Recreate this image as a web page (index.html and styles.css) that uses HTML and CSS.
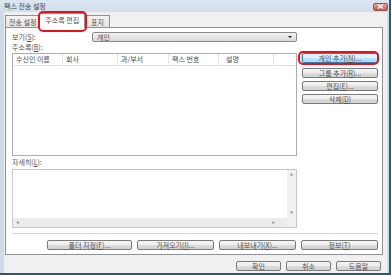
FILE: index.html
```html
<!DOCTYPE html>
<html>
  <head>
    <title>팩스 전송 설정</title>
    <link rel="stylesheet" href="styles.css">
  </head>
  <body>
    <div class="desktop">
      <div class="window">
        <div class="titlebar">
          <span class="title">팩스 전송 설정</span>
          <span class="close">
            <svg width="9" height="5" viewBox="0 0 9 5">
              <path d="M2 0.5 L7 4.5 M7 0.5 L2 4.5" stroke="#fff" stroke-width="1.4" />
            </svg>
          </span>
        </div>
        <div class="client">
          <div class="tabs">
            <div class="tab">전송 설정</div>
            <div class="tab active">주소록 편집<span class="mark tab-mark"></span></div>
            <div class="tab">표지</div>
          </div>
          <div class="panel">
            <div class="view-row">
              <span class="label">보기(<u>S</u>):</span>
              <div class="combo"><span>개인</span><span class="arrow"></span></div>
            </div>
            <div class="caption">주소록(<u>B</u>):</div>
            <div class="book">
              <div class="list">
                <div class="list-head">
                  <span class="col c1">수신인 이름</span>
                  <span class="col c2">회사</span>
                  <span class="col c3">과/부서</span>
                  <span class="col c4">팩스 번호</span>
                  <span class="col c5">설명</span>
                  <span class="col c6"></span>
                </div>
              </div>
              <div class="side-buttons">
                <button class="btn focused">개인 추가(<u>N</u>)...<span class="mark btn-mark"></span></button>
                <button class="btn">그룹 추가(<u>R</u>)...</button>
                <button class="btn">편집(<u>E</u>)...</button>
                <button class="btn">삭제(<u>D</u>)</button>
              </div>
            </div>
            <div class="caption detail-cap">자세히(<u>L</u>):</div>
            <div class="detail">
              <div class="detail-main">
                <div class="detail-body"></div>
                <div class="vscroll"><span>▲</span><span>▼</span></div>
              </div>
              <div class="hscroll-row">
                <div class="hscroll"><span>◀</span><span>▶</span></div>
                <div class="corner"></div>
              </div>
            </div>
            <div class="sep"></div>
            <div class="panel-buttons">
              <button class="btn wide">폴더 지정(<u>F</u>)...</button>
              <button class="btn">가져오기(<u>I</u>)...</button>
              <button class="btn">내보내기(<u>X</u>)...</button>
              <button class="btn">정보(<u>T</u>)</button>
            </div>
          </div>
          <div class="dialog-buttons">
            <button class="btn">확인</button>
            <button class="btn">취소</button>
            <button class="btn">도움말</button>
          </div>
        </div>
      </div>
    </div>
  </body>
</html>
```
FILE: styles.css
```css
/* Windows 7 style fax dialog */
body {
  margin: 0;
  font-family: "Noto Sans CJK KR", "Noto Sans", sans-serif;
  font-size: 7px;
  color: #505050;
  overflow: hidden;
}
.desktop {
  width: 391px;
  height: 275px;
  background-color: #2a5b6b;
}
.window {
  width: 389px;
  height: 273px;
  background-color: #cfdbe8;
  display: flex;
  flex-direction: column;
}
.titlebar {
  height: 12px;
  display: flex;
  align-items: center;
  justify-content: space-between;
  padding: 0 1px 0 4px;
  background: linear-gradient(#dbe6f2, #d2deeb);
}
.title {
  line-height: 10px;
  color: #444;
}
.close {
  width: 15px;
  height: 8px;
  margin-top: 1px;
  border: 1px solid #9a4d4d;
  border-radius: 2px;
  background: linear-gradient(#e5a59c, #c9574b);
  display: flex;
  align-items: center;
  justify-content: center;
  box-sizing: border-box;
}
.client {
  flex: 1;
  margin: 0 2px 0 4px;
  background-color: #f0f0f0;
  display: flex;
  flex-direction: column;
}
.tabs {
  height: 15px;
  display: flex;
  align-items: flex-end;
  padding-left: 1px;
}
.tab {
  height: 12px;
  line-height: 12px;
  padding: 0 3px;
  border: 1px solid #8e9196;
  border-bottom: none;
  background: linear-gradient(#f3f3f3, #e3e3e3);
  margin-right: -1px;
  box-sizing: border-box;
  position: relative;
}
.tab.active {
  height: 15px;
  margin-bottom: -1px;
  background: #fff;
  padding: 0 5px;
  z-index: 1;
}
.tab:last-child {
  padding: 0 5px 0 6px;
}
.mark {
  position: absolute;
  border: 2px solid #e5121a;
  border-radius: 5px;
  pointer-events: none;
}
.tab-mark {
  left: -2px;
  right: -3px;
  top: -3px;
  bottom: -4px;
}
.panel {
  height: 228px;
  margin: 0 4px 0 1px;
  border: 1px solid #8e9196;
  background: #fff;
  box-sizing: border-box;
  padding: 4px 4px 0 6px;
  display: flex;
  flex-direction: column;
}
.view-row {
  display: flex;
  height: 10px;
  align-items: center;
}
.label {
  width: 80px;
}
.combo {
  width: 205px;
  height: 10px;
  border: 1px solid #8a8a8a;
  border-radius: 2px;
  background: linear-gradient(#f4f4f4, #e6e6e6 50%, #d8d8d8);
  box-sizing: border-box;
  display: flex;
  align-items: center;
  justify-content: space-between;
  padding: 0 4px;
  line-height: 8px;
}
.arrow {
  width: 0;
  height: 0;
  border-left: 2px solid transparent;
  border-right: 2px solid transparent;
  border-top: 2px solid #222;
}
.caption {
  height: 11px;
  line-height: 11px;
}
.book {
  display: flex;
  gap: 5px;
  height: 103px;
}
.list {
  width: 285px;
  border: 1px solid #a9acb2;
  box-sizing: border-box;
}
.list-head {
  display: flex;
  height: 11px;
  border-bottom: 1px solid #e3e3e3;
  line-height: 10px;
}
.col {
  border-right: 1px solid #e3e3e3;
  padding-left: 3px;
  box-sizing: border-box;
}
.c1 { width: 50px; }
.c2 { width: 55px; }
.c3 { width: 51px; }
.c4 { width: 50px; }
.c5 { width: 55px; padding-left: 7px; }
.c6 { width: 22px; border-right: none; }
.side-buttons {
  width: 76px;
  display: flex;
  flex-direction: column;
  gap: 3px;
}
.btn {
  height: 10px;
  padding: 0;
  font: inherit;
  color: #505050;
  line-height: 8px;
  border: 1px solid #7a7a7a;
  border-radius: 2px;
  background: linear-gradient(#f6f6f6, #ececec 50%, #dddddd 51%, #d2d2d2);
  box-sizing: border-box;
  position: relative;
}
.btn.focused {
  margin-bottom: 2px;
  border-color: #3c7fb1;
  background: linear-gradient(#eaf6fd, #d9f0fc 50%, #bee6fd 51%, #a7d9f5);
  box-shadow: 0 0 0 1px #a8dcf7;
}
.btn-mark {
  left: -5px;
  right: -2px;
  top: -3px;
  bottom: -3px;
}
.detail-cap {
  height: 13px;
  line-height: 13px;
}
.detail {
  width: 285px;
  height: 59px;
  border: 1px solid #c8c8c8;
  box-sizing: border-box;
  display: flex;
  flex-direction: column;
}
.detail-main {
  flex: 1;
  display: flex;
}
.detail-body {
  flex: 1;
}
.vscroll {
  width: 9px;
  background: #f0f0f0;
  display: flex;
  flex-direction: column;
  justify-content: space-between;
  align-items: center;
  font-size: 3px;
  color: #888;
  padding: 3px 0;
}
.hscroll-row {
  height: 9px;
  display: flex;
}
.hscroll {
  flex: 1;
  background: #ebebeb;
  display: flex;
  justify-content: space-between;
  align-items: center;
  padding: 0 12px 0 3px;
  font-size: 3px;
  color: #888;
}
.corner {
  width: 9px;
  background: #f0f0f0;
}
.sep {
  height: 1px;
  margin-top: 5px;
  background: #d5d5d5;
}
.panel-buttons {
  display: flex;
  justify-content: flex-end;
  gap: 5px;
  margin-top: 6px;
}
.panel-buttons .btn {
  width: 77px;
}
.panel-buttons .btn.wide {
  width: 85px;
}
.dialog-buttons {
  display: flex;
  justify-content: flex-end;
  gap: 5px;
  margin-top: 6px;
  padding-right: 6px;
}
.dialog-buttons .btn {
  width: 45px;
}
u {
  text-decoration: underline;
}
```
